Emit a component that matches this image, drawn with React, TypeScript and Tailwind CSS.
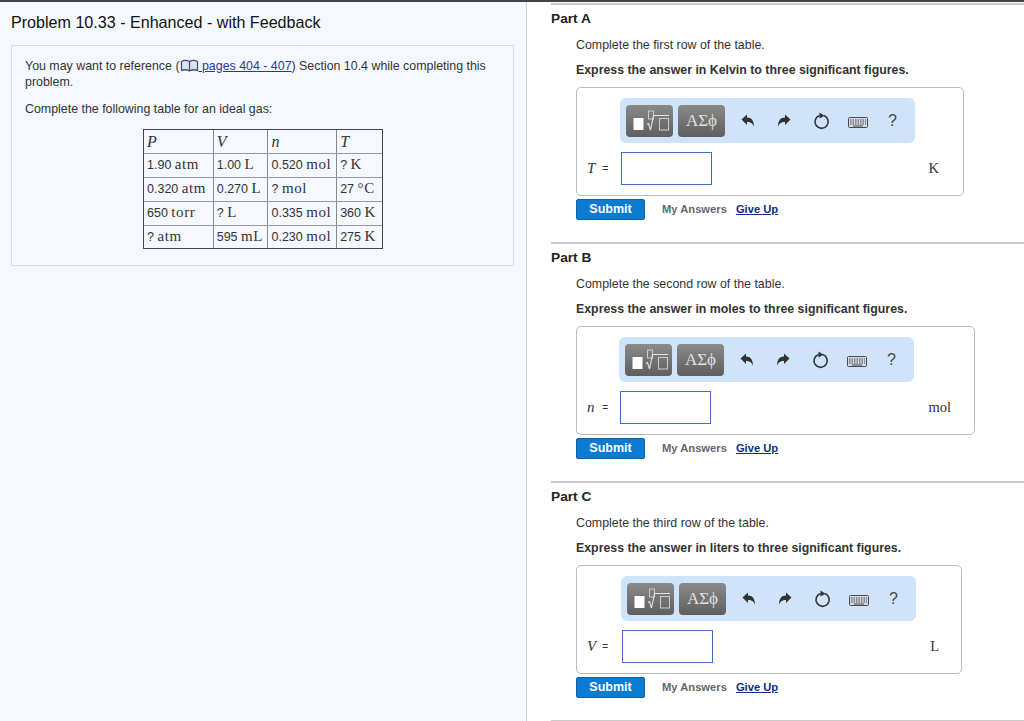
const rows = [
  ["1.90 atm", "1.00 L", "0.520 mol", "? K"],
  ["0.320 atm", "0.270 L", "? mol", "27 °C"],
  ["650 torr", "? L", "0.335 mol", "360 K"],
  ["? atm", "595 mL", "0.230 mol", "275 K"],
];

const parts = [
  { name: "Part A", row: "first", unit: "Kelvin", sym: "T", label: "K", boxW: "w-[388px]", inputMl: "ml-[13px]", toolMl: "ml-[43px]", unitMr: "mr-6" },
  { name: "Part B", row: "second", unit: "moles", sym: "n", label: "mol", boxW: "w-[399px]", inputMl: "ml-[12px]", toolMl: "ml-[42px]", unitMr: "mr-[23px]" },
  { name: "Part C", row: "third", unit: "liters", sym: "V", label: "L", boxW: "w-[386px]", inputMl: "ml-[14px]", toolMl: "ml-[44px]", unitMr: "mr-[22px]" },
];

const serif = "font-['Liberation_Serif',serif]";

// splits "1.90 atm" so the number stays sans and the unit goes serif
function Cell({ value }: { value: string }) {
  const i = value.indexOf(" ");
  return (
    <>
      <span>{value.slice(0, i)}</span>{" "}
      <span className={`${serif} text-[15px] tracking-[0.6px]`}>{value.slice(i + 1)}</span>
    </>
  );
}

function GasTable() {
  const widths = ["w-[70px]", "w-[55px]", "w-[69px]", "w-[45px]"];
  return (
    <div className="mt-[12px] ml-[131px] w-[240px] border border-[#444] text-[12.5px] text-[#333]">
      <div className="flex h-[24px] items-center border-b border-[#999]">
        {["P", "V", "n", "T"].map((h, i) => (
          <div key={h} className={`${widths[i]} flex h-full items-center pl-[3px] ${i < 3 ? "border-r border-[#888]" : ""} ${serif} text-[16px] italic`}>
            {h}
          </div>
        ))}
      </div>
      {rows.map((r, ri) => (
        <div key={r[0]} className={`flex items-center ${ri < 3 ? "h-[24px] border-b border-[#999]" : "h-[22px]"}`}>
          {r.map((c, i) => (
            <div key={c} className={`${widths[i]} flex h-full items-center whitespace-pre pb-[2px] pl-[3px] ${i < 3 ? "border-r border-[#888]" : ""}`}>
              <span>
                <Cell value={c} />
              </span>
            </div>
          ))}
        </div>
      ))}
    </div>
  );
}

function BookIcon() {
  return (
    <svg width="19" height="13" viewBox="0 0 18 13" className="inline-block align-[-2px]">
      <path d="M1 2.5c2.500-1.500 5.500-1.500 8 0 2.500-1.500 5.500-1.500 8 0v9c-2.500-1-5.500-1-8 .5-2.500-1.500-5.500-1.500-8-.5z" fill="#dfe3f0" stroke="#4a4a78" strokeWidth="1.300" />
      <path d="M9 2.500V12" stroke="#4a4a78" strokeWidth="1.300" />
    </svg>
  );
}

function TemplatesIcon() {
  return (
    <svg width="42" height="30" viewBox="0 0 42 30">
      <rect x="4.500" y="12" width="10" height="12" fill="#fff" />
      <rect x="19.500" y="5" width="5" height="8" fill="none" stroke="#ccc" strokeWidth="1" />
      <path d="M18 18.500l1.500-1 2 6.500 3-14.500h15.500" fill="none" stroke="#e4e4e4" strokeWidth="1.100" />
      <rect x="30.500" y="12.500" width="9" height="11.500" fill="none" stroke="#ccc" strokeWidth="1" />
    </svg>
  );
}

function Toolbar({ ml }: { ml: string }) {
  return (
    <div className={`${ml} flex h-[45px] w-[295px] items-center rounded-[6px] bg-[#cfe4fb]`}>
      <div className="ml-[6px] flex h-[32px] w-[47px] items-center justify-center rounded-[4px] bg-gradient-to-b from-[#8a8a8a] to-[#5f5f5f]">
        <TemplatesIcon />
      </div>
      <div className={`ml-[5px] flex h-[32px] w-[47px] items-center justify-center rounded-[4px] bg-gradient-to-b from-[#8a8a8a] to-[#5f5f5f] ${serif} text-[17px] text-[#e0e0e0]`}>
        ΑΣϕ
      </div>
      {/* undo */}
      <svg width="14" height="14" viewBox="0 0 14 14" className="ml-[16px]">
        <path d="M0.500 5.500L6 0.500v3c4.500 0 7 3 7 9.500-1-3.500-3-5-7-5v3z" fill="#333" />
      </svg>
      {/* redo */}
      <svg width="14" height="14" viewBox="0 0 14 14" className="ml-[22px]">
        <path d="M13.500 5.500L8 0.500v3c-4.500 0-7 3-7 9.500 1-3.500 3-5 7-5v3z" fill="#333" />
      </svg>
      {/* reset */}
      <svg width="18" height="18" viewBox="0 0 18 18" className="ml-[22px]">
        <path d="M11 3.600A6.600 6.600 0 1 1 6.500 3.500" fill="none" stroke="#333" strokeWidth="1.600" />
        <path d="M6.500 0.500l5 3.200-5 2.800z" fill="#333" />
      </svg>
      {/* keyboard */}
      <svg width="20" height="11" viewBox="0 0 20 11" className="mt-[3px] ml-[17px]">
        <rect x="0.500" y="0.500" width="19" height="10" rx="1" fill="#d4dae3" stroke="#4a4a4a" />
        <path d="M2 3h16M2 5h16M2 7h16" stroke="#444" strokeDasharray="1.500 1" />
        <path d="M5 9h10" stroke="#444" />
      </svg>
      <span className="ml-[20px] font-['Liberation_Sans',sans-serif] text-[16px] text-[#444]">?</span>
    </div>
  );
}

function Part({ p }: { p: (typeof parts)[number] }) {
  return (
    <section className="h-[239px] border-t-[2px] border-[#ccc] pt-[5px]">
      <h3 className="text-[13.7px] leading-[18px] font-bold text-[#222]">{p.name}</h3>
      <div className="ml-[25px]">
        <p className="mt-[8px] text-[12.4px] leading-[18px] text-[#333]">Complete the {p.row} row of the table.</p>
        <p className="mt-[7px] text-[12.35px] leading-[18px] font-bold text-[#333]">
          Express the answer in {p.unit} to three significant figures.
        </p>
        <div className={`mt-[8px] h-[109px] ${p.boxW} rounded-[5px] border border-[#bbb] pt-[10px]`}>
          <Toolbar ml={p.toolMl} />
          <div className="mt-[9px] flex items-center">
            <span className="ml-[10px] flex w-[21px] items-center justify-between whitespace-pre text-[13px] text-[#333]">
              <i className={`${serif} text-[15px]`}>{p.sym}</i>
              <span className="text-[10px]">=</span>
            </span>
            <div className={`${p.inputMl} h-[33px] w-[91px] border border-[#3f6fc4] bg-white`} />
            <span className={`ml-auto ${p.unitMr} ${serif} text-[14.5px] text-[#333]`}>{p.label}</span>
          </div>
        </div>
        <div className="mt-[3px] flex items-center">
          <div className="flex h-[21px] w-[69px] items-center justify-center rounded-[2px] border border-[#0b63a8] bg-[#0d7bcf] text-[12.5px] font-bold text-white">
            Submit
          </div>
          <span className="ml-[17px] text-[11.2px] font-bold text-[#666]">My Answers</span>
          <span className="ml-[9px] text-[11.2px] font-bold text-[#0b2f8a] underline">Give Up</span>
        </div>
      </div>
    </section>
  );
}

export default function App() {
  return (
    <div className="flex h-[721px] w-[1024px] flex-col overflow-hidden bg-white font-['Liberation_Sans',sans-serif]">
      <div className="h-[2px] shrink-0 bg-[#444]" />
      <div className="flex min-h-0 flex-1">
        <div className="w-[527px] shrink-0 border-r border-[#c5d5ea] bg-[#f5f9ff] pt-[11px]">
          <h1 className="ml-[11px] text-[16.1px] leading-[18px] text-[#111]">Problem 10.33 - Enhanced - with Feedback</h1>
          <div className="mt-[14px] ml-[11px] h-[221px] w-[503px] border border-[#d0deee] pt-[12px] text-[12.4px] leading-[16px] text-[#333]">
            <p className="pl-[13px]">
              You may want to reference (
              <BookIcon />
              <span className="text-[#1c3f94] underline"> pages 404 - 407</span>) Section 10.4 while completing this
              <br />
              problem.
            </p>
            <p className="mt-[11px] pl-[13px]">Complete the following table for an ideal gas:</p>
            <GasTable />
          </div>
        </div>
        <div className="min-w-0 flex-1 pt-px pl-[24px]">
          {parts.map((p) => (
            <Part key={p.name} p={p} />
          ))}
          <div className="h-[2px] bg-[#ccc]" />
        </div>
      </div>
    </div>
  );
}
